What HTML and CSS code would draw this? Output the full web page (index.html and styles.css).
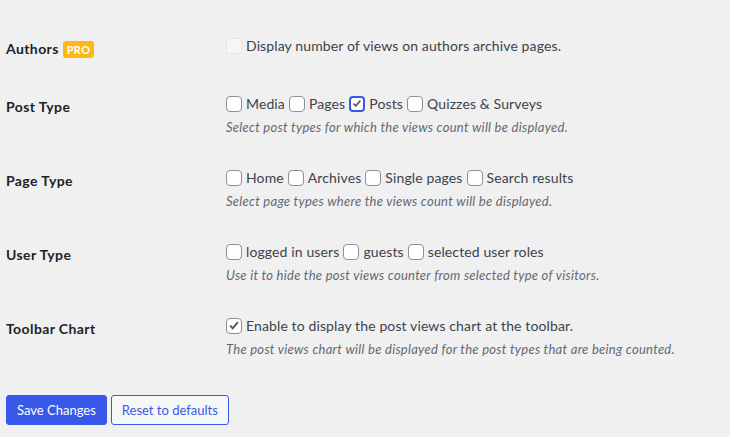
FILE: index.html
```html
<!DOCTYPE html>
<html lang="en">
<head>
  <meta charset="UTF-8">
  <title>Post Views Counter - Display</title>
  <link rel="stylesheet" href="styles.css">
</head>
<body>
  <div class="wrap">
    <div class="form-table">

      <div class="row">
        <div class="row-label">Authors <span class="pro">PRO</span></div>
        <div class="row-field">
          <div class="options">
            <label class="opt"><span class="box disabled"></span>Display number of views on authors archive pages.</label>
          </div>
        </div>
      </div>

      <div class="row">
        <div class="row-label">Post Type</div>
        <div class="row-field">
          <div class="options">
            <label class="opt"><span class="box"></span>Media</label>
            <label class="opt"><span class="box"></span>Pages</label>
            <label class="opt"><span class="box checked focus"><svg viewBox="0 0 16 16"><path d="M3.5 8.2l3 3 6-7"/></svg></span>Posts</label>
            <label class="opt"><span class="box"></span>Quizzes &amp; Surveys</label>
          </div>
          <p class="description">Select post types for which the views count will be displayed.</p>
        </div>
      </div>

      <div class="row">
        <div class="row-label">Page Type</div>
        <div class="row-field">
          <div class="options">
            <label class="opt"><span class="box"></span>Home</label>
            <label class="opt"><span class="box"></span>Archives</label>
            <label class="opt"><span class="box"></span>Single pages</label>
            <label class="opt"><span class="box"></span>Search results</label>
          </div>
          <p class="description">Select page types where the views count will be displayed.</p>
        </div>
      </div>

      <div class="row">
        <div class="row-label">User Type</div>
        <div class="row-field">
          <div class="options">
            <label class="opt"><span class="box"></span>logged in users</label>
            <label class="opt"><span class="box"></span>guests</label>
            <label class="opt"><span class="box"></span>selected user roles</label>
          </div>
          <p class="description">Use it to hide the post views counter from selected type of visitors.</p>
        </div>
      </div>

      <div class="row">
        <div class="row-label">Toolbar Chart</div>
        <div class="row-field">
          <div class="options">
            <label class="opt"><span class="box checked"><svg viewBox="0 0 16 16"><path d="M3.5 8.2l3 3 6-7"/></svg></span>Enable to display the post views chart at the toolbar.</label>
          </div>
          <p class="description">The post views chart will be displayed for the post types that are being counted.</p>
        </div>
      </div>

    </div>

    <div class="submit">
      <button class="button button-primary">Save Changes</button>
      <button class="button button-secondary">Reset to defaults</button>
    </div>
  </div>
</body>
</html>
```

FILE: styles.css
```css
body {
  margin: 0;
  background: #f0f0f1;
  color: #3c434a;
  font-family: 'Lato', sans-serif;
  font-size: 14px;
}

.wrap {
  padding: 20px 6px 0 6px;
}

.row {
  display: flex;
}

.row-label {
  width: 200px;
  padding: 20px 10px 20px 0;
  line-height: 18px;
  font-weight: 700;
  letter-spacing: 0.4px;
  color: #1d2327;
  display: flex;
  align-items: center;
  align-self: flex-start;
  gap: 4px;
}

.pro {
  background: #fdb913;
  color: #fff;
  font-size: 11px;
  font-weight: 700;
  line-height: 15px;
  letter-spacing: 0.3px;
  padding: 1px 4px;
  border-radius: 3px;
}

.row-field {
  padding: 15px 10px;
}

.options {
  display: flex;
  align-items: center;
  height: 21px;
}

.opt {
  display: flex;
  align-items: center;
  margin-right: 4px;
  line-height: 21px;
  letter-spacing: 0.12px;
}

.box {
  width: 16px;
  height: 16px;
  box-sizing: border-box;
  border: 1px solid #8c8f94;
  border-radius: 4px;
  background: #fff;
  margin-right: 4px;
  display: flex;
  align-items: center;
  justify-content: center;
}

.box svg {
  width: 15px;
  height: 15px;
  fill: none;
  stroke: #50575e;
  stroke-width: 2.2;
}

.box.disabled {
  background: #f6f7f7;
  border-color: #e4e5e7;
}

.box.focus {
  border: 2px solid #3858e9;
}

.description {
  margin: 4px 0 0;
  font-size: 13px;
  line-height: 19px;
  font-style: italic;
  letter-spacing: 0.27px;
  color: #646970;
}

.submit {
  margin-top: 21px;
  display: flex;
  gap: 4px;
}

.button {
  height: 30px;
  padding: 0 10px;
  font-family: inherit;
  font-size: 13px;
  border-radius: 3px;
  border: 1px solid #3858e9;
}

.button-primary {
  background: #3858e9;
  color: #fff;
}

.button-secondary {
  background: #f6f7f7;
  color: #3858e9;
}
```
